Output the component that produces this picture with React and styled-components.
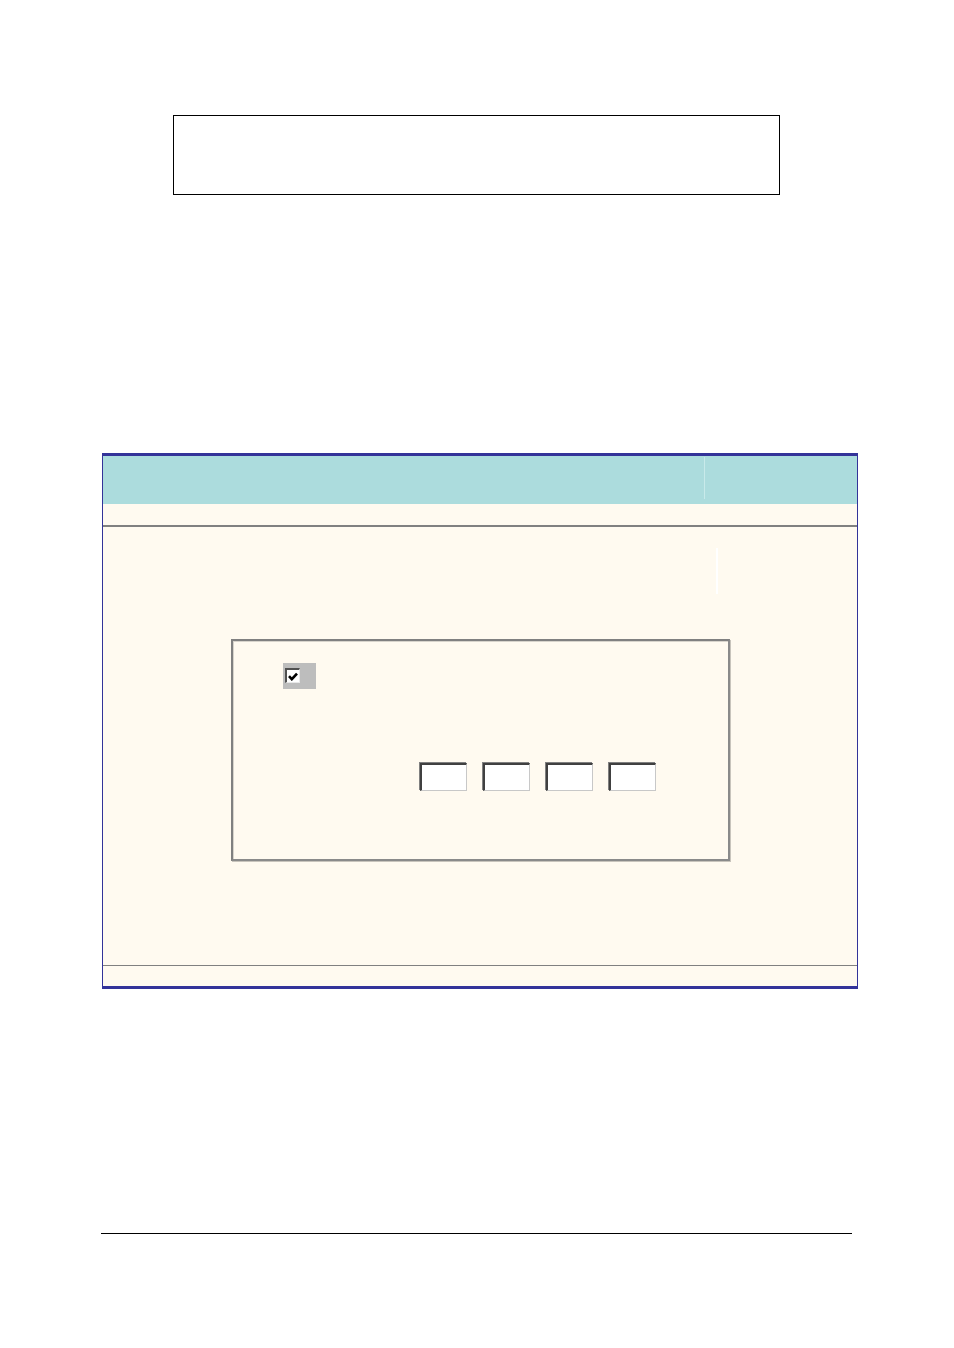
import React from 'react';
import styled, { createGlobalStyle } from 'styled-components';

const GlobalStyle = createGlobalStyle`
	html, body {
		margin: 0;
		padding: 0;
		background: #ffffff;
		font-family: 'Liberation Sans', Arial, sans-serif;
	}
`;

const Page = styled.div`
	width: 954px;
	height: 1348px;
	display: flex;
	flex-direction: column;
`;

const NoteBox = styled.div`
	margin: 115px 0 0 173px;
	width: 605px;
	height: 78px;
	border: 1px solid #000000;
`;

const Panel = styled.div`
	margin: 258px 0 0 102px;
	width: 754px;
	border-top: 3px solid #333399;
	border-bottom: 3px solid #333399;
	border-left: 1px solid #333399;
	border-right: 1px solid #333399;
	background: #fffaf0;
	display: flex;
	flex-direction: column;
`;

const Header = styled.div`
	height: 48px;
	background: #acdcdd;
	display: flex;
	padding-top: 1px;
	box-sizing: border-box;
`;

const HeaderCell = styled.div`
	width: ${p => p.width}px;
	height: 42px;
	border-right: ${p => (p.divider ? '1px solid #c8eaea' : 'none')};
`;

const Spacer = styled.div`
	height: ${p => p.height}px;
`;

const Rule = styled.div`
	height: ${p => p.size}px;
	background: #808080;
`;

const Body = styled.div`
	height: 438px;
	padding: 112px 0 0 128px;
	box-sizing: border-box;
	display: flex;
	flex-direction: column;
	position: relative;
`;

const Faint = styled.div`
	position: absolute;
	left: 613px;
	top: 21px;
	width: 2px;
	height: 46px;
	background: #ffffff;
`;

const Group = styled.div`
	width: 499px;
	height: 222px;
	box-sizing: border-box;
	border-top: 2px solid #808080;
	border-left: 2px solid #808080;
	border-right: 2px solid #8a8a8a;
	border-bottom: 2px solid #8a8a8a;
	box-shadow: inset 1px 1px 0 #d8d4cc, 1px 1px 0 #c8c4bc;
	display: flex;
	flex-direction: column;
	padding: 22px 0 0 50px;
`;

const CheckWrap = styled.div`
	width: 33px;
	height: 26px;
	background: #bdbdbd;
	padding: 5px 0 0 2px;
	box-sizing: border-box;
`;

const CheckBox = styled.div`
	width: 15px;
	height: 15px;
	box-sizing: border-box;
	background: #ffffff;
	border-top: 2px solid #505050;
	border-left: 2px solid #505050;
	border-right: 1px solid #e8e8e8;
	border-bottom: 1px solid #e8e8e8;
	display: flex;
	align-items: center;
	justify-content: center;
`;

const IpRow = styled.div`
	margin: 74px 0 0 137px;
	display: flex;
	gap: 16px;
`;

const IpField = styled.input`
	width: 47px;
	height: 28px;
	box-sizing: border-box;
	padding: 0;
	margin: 0;
	background: #ffffff;
	border-top: 2px solid #404040;
	border-left: 2px solid #404040;
	border-right: 1px solid #c8c8c8;
	border-bottom: 1px solid #c8c8c8;
	box-shadow: -1px -1px 0 #808080;
	outline: none;
`;

const Footer = styled.div`
	margin: 244px 0 0 101px;
	width: 751px;
	height: 1px;
	background: #000000;
`;

export default function App() {
	return (
		<>
			<GlobalStyle />
			<Page>
				<NoteBox />
				<Panel>
					<Header>
						<HeaderCell width={601} divider />
						<HeaderCell width={152} />
					</Header>
					<Spacer height={21} />
					<Rule size={2} />
					<Body>
						<Faint />
						<Group>
							<CheckWrap>
								<CheckBox>
									<svg width="10" height="9" viewBox="0 0 10 9">
										<path d="M1 4.2 L3.8 7.2 L9 1.6" fill="none" stroke="#000" strokeWidth="2.6" />
									</svg>
								</CheckBox>
							</CheckWrap>
							<IpRow>
								{[0, 1, 2, 3].map(i => (
									<IpField key={i} type="text" />
								))}
							</IpRow>
						</Group>
					</Body>
					<Rule size={1} />
					<Spacer height={20} />
				</Panel>
				<Footer />
			</Page>
		</>
	);
}
